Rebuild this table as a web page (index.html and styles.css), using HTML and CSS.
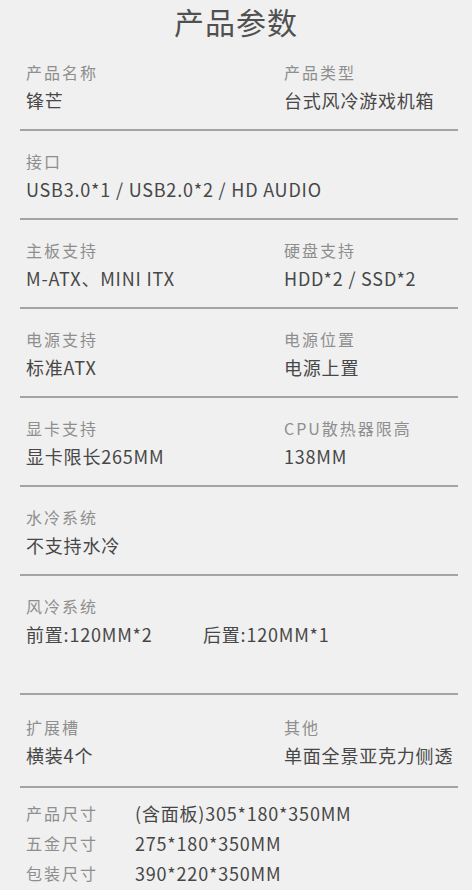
FILE: index.html
```html
<!DOCTYPE html>
<html lang="zh-CN">
<head>
    <meta charset="UTF-8">
    <meta name="viewport" content="width=device-width, initial-scale=1.0">
    <title>产品参数</title>
    <link rel="stylesheet" href="styles.css">
</head>
<body>
    <h1 class="title">产品参数</h1>

    <div class="specs">
        <div class="section">
            <div class="item">
                <div class="label">产品名称</div>
                <div class="value">锋芒</div>
            </div>
            <div class="item">
                <div class="label">产品类型</div>
                <div class="value">台式风冷游戏机箱</div>
            </div>
        </div>

        <div class="section">
            <div class="item wide">
                <div class="label">接口</div>
                <div class="value">USB3.0*1 / USB2.0*2 / HD AUDIO</div>
            </div>
        </div>

        <div class="section">
            <div class="item">
                <div class="label">主板支持</div>
                <div class="value">M-ATX、MINI ITX</div>
            </div>
            <div class="item">
                <div class="label">硬盘支持</div>
                <div class="value">HDD*2 / SSD*2</div>
            </div>
        </div>

        <div class="section">
            <div class="item">
                <div class="label">电源支持</div>
                <div class="value">标准ATX</div>
            </div>
            <div class="item">
                <div class="label">电源位置</div>
                <div class="value">电源上置</div>
            </div>
        </div>

        <div class="section">
            <div class="item">
                <div class="label">显卡支持</div>
                <div class="value">显卡限长265MM</div>
            </div>
            <div class="item">
                <div class="label">CPU散热器限高</div>
                <div class="value">138MM</div>
            </div>
        </div>

        <div class="section">
            <div class="item wide">
                <div class="label">水冷系统</div>
                <div class="value">不支持水冷</div>
            </div>
        </div>

        <div class="section fans">
            <div class="item wide">
                <div class="label">风冷系统</div>
                <div class="value"><span class="fan">前置:120MM*2</span><span>后置:120MM*1</span></div>
            </div>
        </div>

        <div class="section slots">
            <div class="item">
                <div class="label">扩展槽</div>
                <div class="value">横装4个</div>
            </div>
            <div class="item">
                <div class="label">其他</div>
                <div class="value">单面全景亚克力侧透</div>
            </div>
        </div>

        <div class="sizes">
            <div class="size-row">
                <span class="label">产品尺寸</span>
                <span class="value">(含面板)305*180*350MM</span>
            </div>
            <div class="size-row">
                <span class="label">五金尺寸</span>
                <span class="value">275*180*350MM</span>
            </div>
            <div class="size-row">
                <span class="label">包装尺寸</span>
                <span class="value">390*220*350MM</span>
            </div>
        </div>
    </div>
</body>
</html>
```

FILE: styles.css
```css
body {
    margin: 0;
    background: #f0f0f0;
    font-family: "Noto Sans CJK SC", "Noto Sans", sans-serif;
    color: #4a4a4a;
}

.title {
    margin: 0;
    padding-top: 1px;
    height: 44px;
    line-height: 40px;
    text-align: center;
    font-size: 30px;
    font-weight: 400;
    letter-spacing: 1px;
    color: #505050;
}

.specs {
    padding: 13px 14px 0 20px;
}

.section {
    display: flex;
    height: 87px;
    border-bottom: 2px solid #a4a4a4;
}

.section:first-child {
    height: 71px;
}

.section.fans {
    height: 117px;
}

.section.slots {
    height: 91px;
}

.item {
    flex: 0 0 258px;
    padding-left: 6px;
    padding-top: 16px;
    box-sizing: border-box;
}

.item + .item {
    flex: 1;
}

.section:first-child .item {
    padding-top: 0;
}

.section.slots .item {
    padding-top: 18px;
}

.item.wide {
    flex: 1;
}

.label {
    font-size: 16px;
    line-height: 28px;
    color: #8e8e8e;
    letter-spacing: 2px;
}

.value {
    font-size: 18px;
    line-height: 28px;
    color: #474747;
    letter-spacing: 0.8px;
}

.fan {
    display: inline-block;
    width: 177px;
}

.sizes {
    padding: 10px 0 0 6px;
}

.size-row {
    display: flex;
    line-height: 30px;
}

.size-row .label {
    width: 109px;
    line-height: 30px;
}

.size-row .value {
    line-height: 30px;
}
```
